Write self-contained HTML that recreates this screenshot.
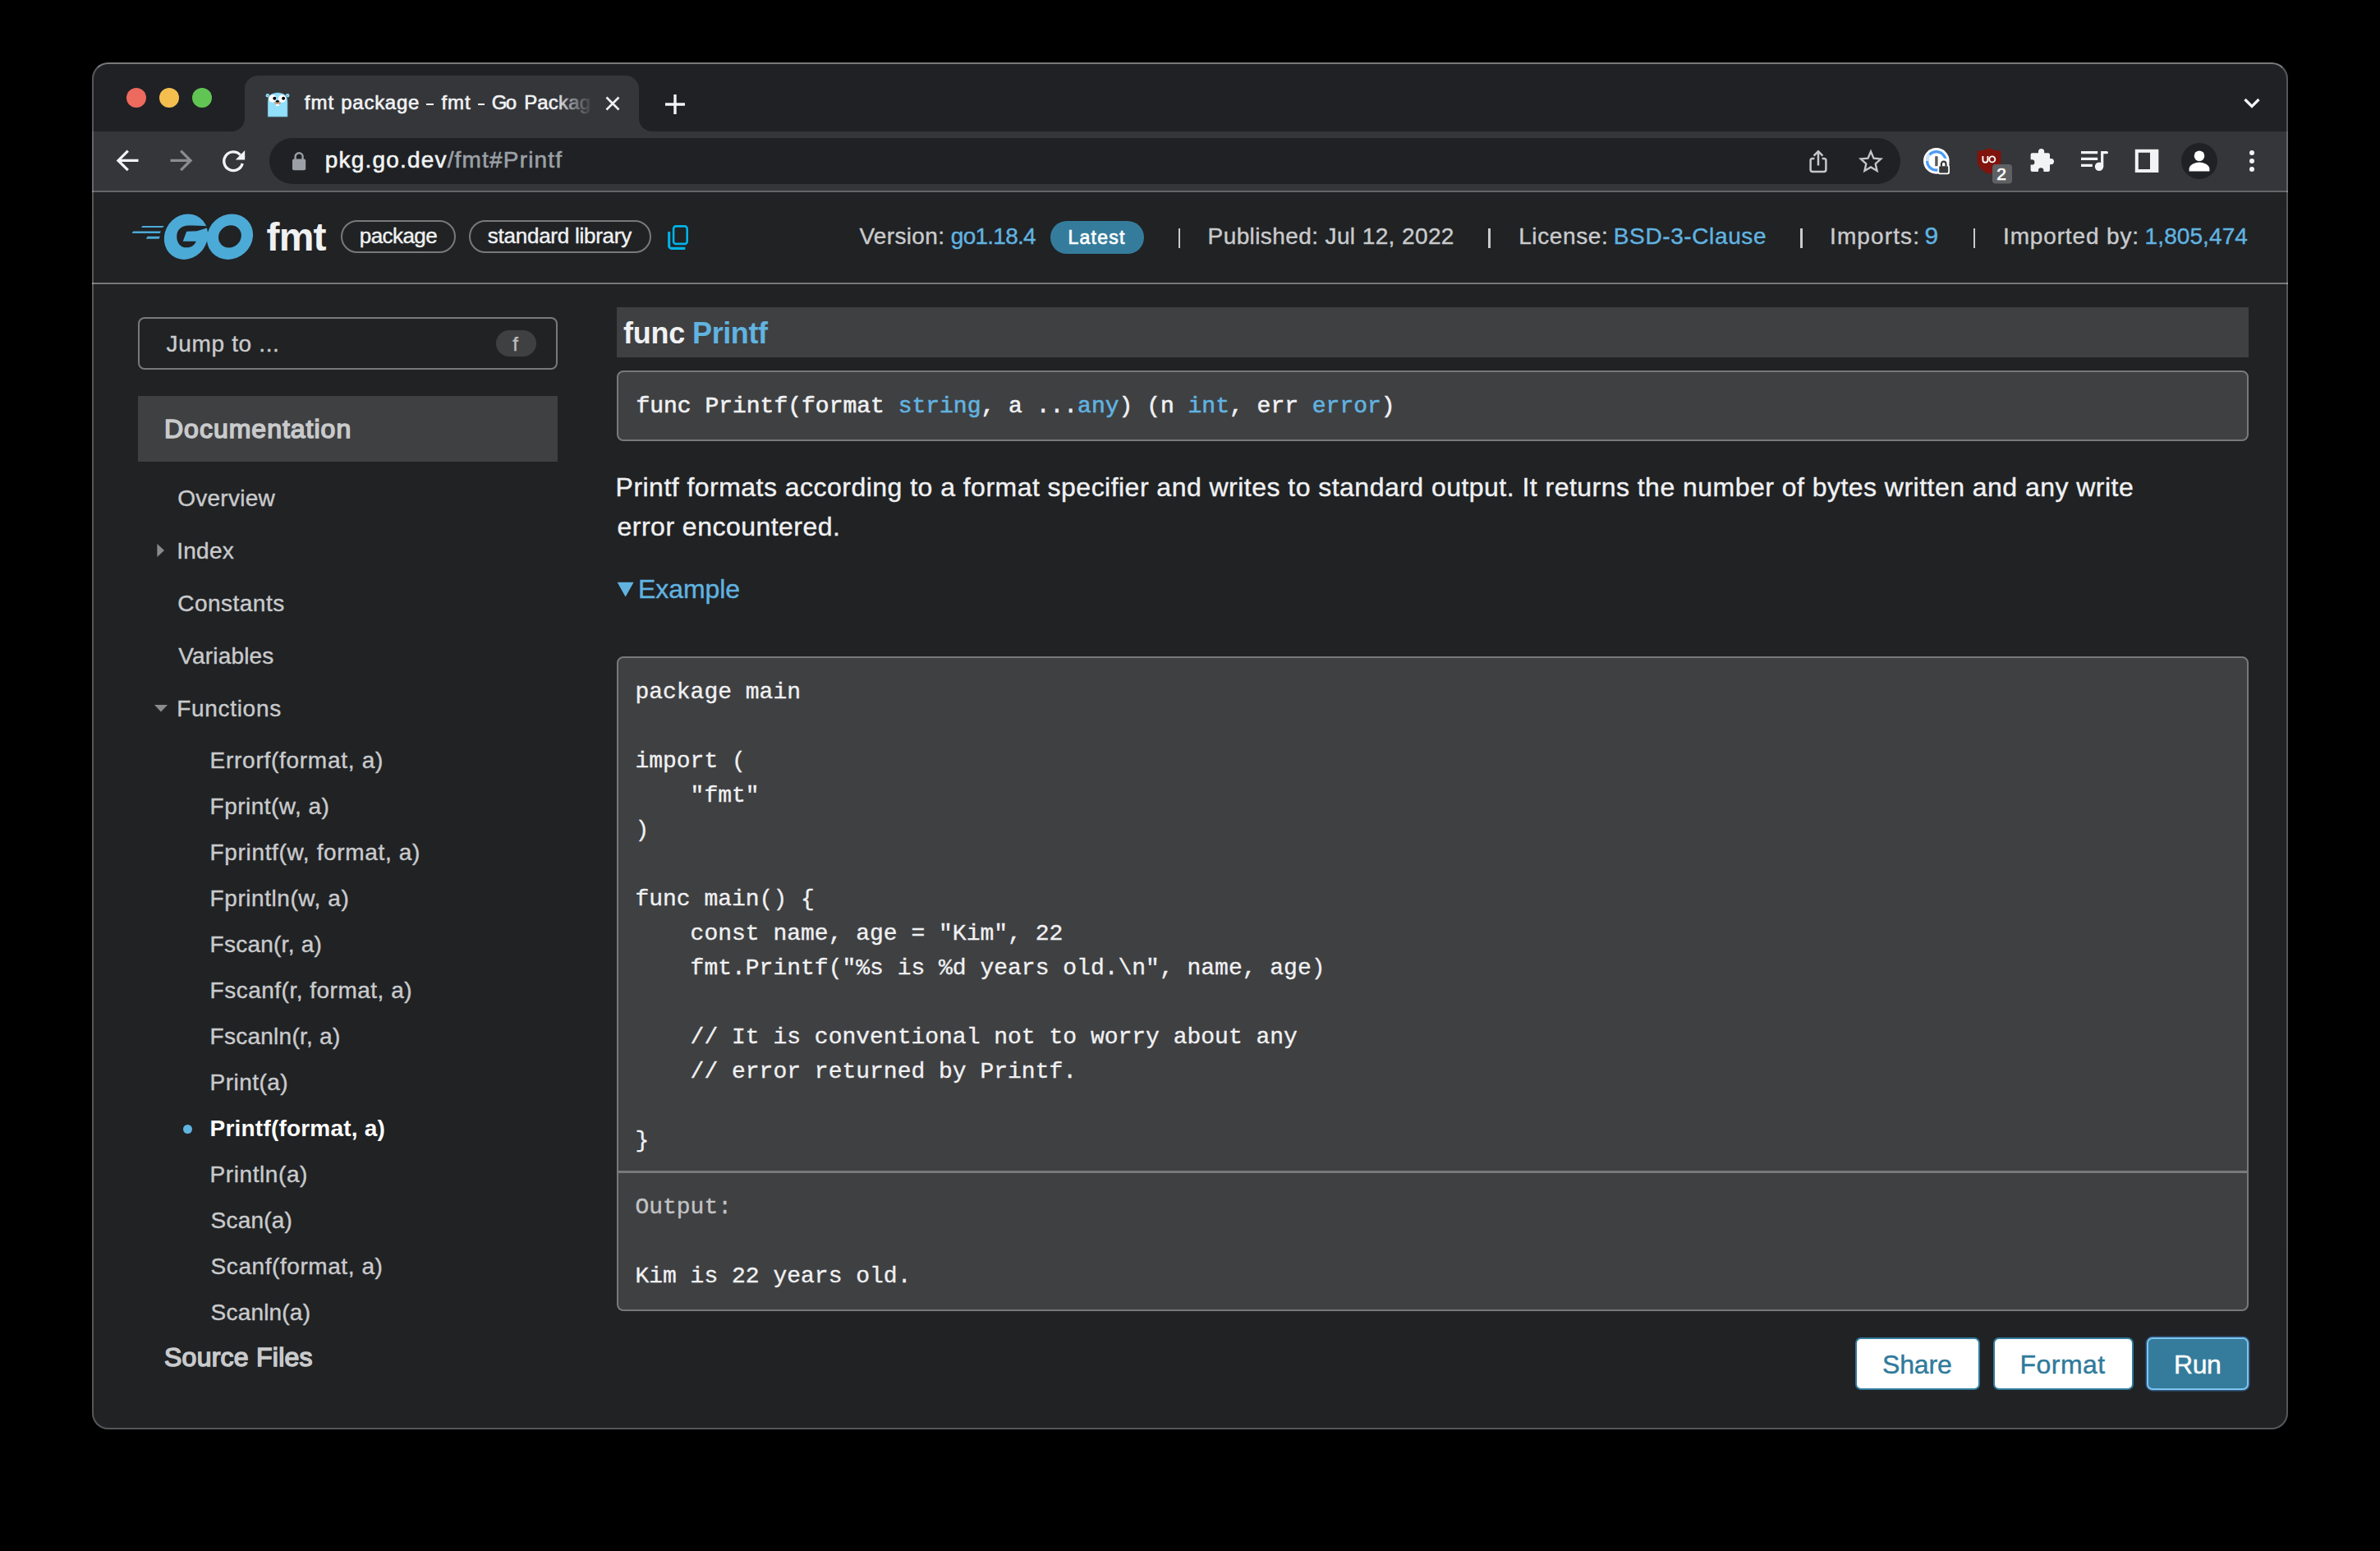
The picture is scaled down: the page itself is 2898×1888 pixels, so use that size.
<!DOCTYPE html>
<html lang="en"><head><meta charset="utf-8"><title>fmt package - fmt - Go Packages</title>
<style>
html,body{margin:0;padding:0;background:#000;}
body{width:2898px;height:1888px;position:relative;overflow:hidden;font-family:"Liberation Sans",sans-serif;}
#win{position:absolute;left:112px;top:76px;width:2674px;height:1664px;border-radius:20px;overflow:hidden;background:#202224;}
#pg{position:absolute;left:-112px;top:-76px;width:2898px;height:1888px;}
#rim{position:absolute;left:112px;top:76px;width:2674px;height:1664px;border-radius:20px;box-sizing:border-box;border:2px solid rgba(255,255,255,0.24);border-top-color:rgba(255,255,255,0.40);pointer-events:none;}
</style></head><body>
<div id="win"><div id="pg">
<div style="position:absolute;left:112px;top:76px;width:2674px;height:84px;background:#202124;"></div><div style="position:absolute;left:112px;top:160px;width:2674px;height:72px;background:#35363a;"></div><div style="position:absolute;left:112px;top:232px;width:2674px;height:2px;background:#646569;"></div><div style="position:absolute;left:298px;top:92px;width:480px;height:68px;background:#35363a;border-radius:16px 16px 0 0;"></div><svg style="position:absolute;left:282px;top:144px;" width="16" height="16" viewBox="0 0 16 16"><path d="M16 0 V16 H0 A16 16 0 0 0 16 0Z" fill="#35363a"/></svg><svg style="position:absolute;left:778px;top:144px;" width="16" height="16" viewBox="0 0 16 16"><path d="M0 0 V16 H16 A16 16 0 0 1 0 0Z" fill="#35363a"/></svg><div style="position:absolute;left:154px;top:107px;width:24px;height:24px;background:#ec6a5e;border-radius:50%;"></div><div style="position:absolute;left:194px;top:107px;width:24px;height:24px;background:#f4bf4f;border-radius:50%;"></div><div style="position:absolute;left:234px;top:107px;width:24px;height:24px;background:#61c554;border-radius:50%;"></div><svg style="position:absolute;left:320px;top:108px;" width="36" height="38" viewBox="0 0 36 38">
<g transform="translate(-320,-108)">
<circle cx="325.8" cy="116.3" r="2.2" fill="#92dffb"/><circle cx="350.2" cy="116.3" r="2.2" fill="#92dffb"/><ellipse cx="325.9" cy="116.5" rx="1" ry="0.5" fill="rgba(70,120,140,0.7)"/><ellipse cx="350.1" cy="116.5" rx="1" ry="0.5" fill="rgba(70,120,140,0.7)"/>
<path d="M326 142.2 V124 C326 116 331 112.8 338.1 112.8 C345.2 112.8 350.2 116 350.2 124 V142.2 Z" fill="#92dffb" stroke="rgba(70,110,125,0.55)" stroke-width="1"/>
<circle cx="331.8" cy="120" r="4.7" fill="#fff"/><circle cx="343.6" cy="120" r="4.7" fill="#fff"/>
<circle cx="334.3" cy="119.8" r="2" fill="#000"/><circle cx="345.1" cy="119.8" r="2" fill="#000"/>
<ellipse cx="338" cy="125.3" rx="3.9" ry="1.6" fill="#c99a7d"/>
<ellipse cx="337.9" cy="123.3" rx="2" ry="1.4" fill="#111"/>
<rect x="336.1" y="126.9" width="3.7" height="2.1" fill="#fff"/>
</g></svg><div style="position:absolute;left:370.8px;top:113.18px;font-family:'Liberation Sans', sans-serif;font-size:24px;line-height:1;color:#f1f3f4;font-weight:400;white-space:pre;letter-spacing:1.08px;-webkit-text-stroke:0.6px #f1f3f4;">fmt</div><div style="position:absolute;left:415.3px;top:113.18px;font-family:'Liberation Sans', sans-serif;font-size:24px;line-height:1;color:#f1f3f4;font-weight:400;white-space:pre;letter-spacing:0.72px;-webkit-text-stroke:0.6px #f1f3f4;">package</div><div style="position:absolute;left:519.2px;top:126px;width:8.4px;height:2.4px;background:#f1f3f4;"></div><div style="position:absolute;left:537.5px;top:113.18px;font-family:'Liberation Sans', sans-serif;font-size:24px;line-height:1;color:#f1f3f4;font-weight:400;white-space:pre;letter-spacing:0.9px;-webkit-text-stroke:0.6px #f1f3f4;">fmt</div><div style="position:absolute;left:582px;top:126px;width:8.4px;height:2.4px;background:#f1f3f4;"></div><div style="position:absolute;left:598.8px;top:113.18px;font-family:'Liberation Sans', sans-serif;font-size:24px;line-height:1;color:#f1f3f4;font-weight:400;white-space:pre;letter-spacing:-1.8px;-webkit-text-stroke:0.6px #f1f3f4;">Go</div><div style="position:absolute;left:638.2px;top:113.18px;font-family:'Liberation Sans', sans-serif;font-size:24px;line-height:1;color:#f1f3f4;font-weight:400;white-space:pre;letter-spacing:0.15px;-webkit-text-stroke:0.6px #f1f3f4;">Packag</div><div style="position:absolute;left:676px;top:100px;width:48px;height:50px;background:linear-gradient(90deg,rgba(53,54,58,0) 0,rgba(53,54,58,0.55) 22px,rgba(53,54,58,0.88) 40px,#35363a 48px);"></div><svg style="position:absolute;left:736px;top:116px;" width="20" height="20" viewBox="0 0 20 20"><path d="M2.5 2.5 L17.5 17.5 M17.5 2.5 L2.5 17.5" stroke="#f1f3f4" stroke-width="2.6" fill="none"/></svg><svg style="position:absolute;left:808px;top:113px;" width="28" height="28" viewBox="0 0 28 28"><path d="M14 2 V26 M2 14 H26" stroke="#f1f3f4" stroke-width="3.4" fill="none"/></svg><svg style="position:absolute;left:2730px;top:118px;" width="24" height="16" viewBox="0 0 24 16"><path d="M3.5 3 L12 11.5 L20.5 3" stroke="#f1f3f4" stroke-width="3.2" fill="none"/></svg><svg style="position:absolute;left:140px;top:180px;" width="32" height="32" viewBox="0 0 32 32"><path d="M28.5 15.4 H4.5 M15.8 3.6 L4 15.4 L15.8 27.2" stroke="#f1f3f4" stroke-width="3.3" fill="none" stroke-linejoin="miter"/></svg><svg style="position:absolute;left:204px;top:180px;" width="32" height="32" viewBox="0 0 32 32"><path d="M3.5 15.4 H27.5 M16.2 3.6 L28 15.4 L16.2 27.2" stroke="#8b8c90" stroke-width="3.3" fill="none"/></svg><svg style="position:absolute;left:268px;top:180px;" width="32" height="32" viewBox="0 0 32 32"><path d="M24.6 8.6 A11.4 11.4 0 1 0 27.2 19" stroke="#f1f3f4" stroke-width="3.3" fill="none"/>
<path d="M30.2 3 V14.4 H18.8 Z" fill="#f1f3f4"/></svg><div style="position:absolute;left:328px;top:168px;width:1986px;height:56px;background:#202124;border-radius:28px;"></div><svg style="position:absolute;left:352px;top:184px;" width="24" height="26" viewBox="0 0 24 26"><rect x="4" y="9.4" width="16.2" height="13.8" rx="2" fill="#9aa0a6"/>
<path d="M7.6 10 V6.8 A4.5 4.5 0 0 1 16.6 6.8 V10" stroke="#9aa0a6" stroke-width="2.4" fill="none"/></svg><div style="position:absolute;left:395.8px;top:181.10px;font-family:'Liberation Sans', sans-serif;font-size:28px;line-height:1;color:#f1f3f4;font-weight:400;white-space:pre;letter-spacing:1.183px;-webkit-text-stroke:0.6px #f1f3f4;">pkg.go.dev<span style="color:#9aa0a6;-webkit-text-stroke-color:#9aa0a6">/fmt#Printf</span></div><svg style="position:absolute;left:2198px;top:178px;" width="32" height="36" viewBox="0 0 32 36"><path d="M11.4 15 H9 A2.4 2.4 0 0 0 6.6 17.4 V28.6 A2.4 2.4 0 0 0 9 31 H23 A2.4 2.4 0 0 0 25.4 28.6 V17.4 A2.4 2.4 0 0 0 23 15 H20.6" stroke="#c4c7ca" stroke-width="2.5" fill="none"/>
<path d="M16 23.4 V6.4 M10.6 11.6 L16 6.2 L21.4 11.6" stroke="#c4c7ca" stroke-width="2.5" fill="none"/></svg><svg style="position:absolute;left:2260px;top:178px;" width="36" height="36" viewBox="0 0 36 36"><path transform="translate(18 18.6) scale(0.9) translate(-18 -18.6)" d="M18 5.2 L21.9 14.2 L31.6 15.1 L24.3 21.6 L26.4 31.2 L18 26.2 L9.6 31.2 L11.7 21.6 L4.4 15.1 L14.1 14.2 Z" stroke="#c4c7ca" stroke-width="2.6" fill="none" stroke-linejoin="miter"/></svg><svg style="position:absolute;left:2340px;top:178px;" width="40" height="40" viewBox="0 0 40 40"><circle cx="17.8" cy="17.9" r="15.8" fill="#fff"/>
<circle cx="17.8" cy="17.9" r="11.2" fill="none" stroke="#4b9cf5" stroke-width="3.2"/>
<path d="M17.8 17.9 m-11.2 0 a11.2 11.2 0 0 1 3 -7.6" stroke="#cfe3fb" stroke-width="3.4" fill="none"/>
<rect x="16.2" y="12.2" width="3.4" height="12" fill="#5a5a5a"/>
<rect x="19.4" y="22.6" width="14.6" height="11.6" rx="2.6" fill="#fff"/>
<path d="M22.6 24 V21.2 A4.1 4.1 0 0 1 30.8 21.2 V24" stroke="#fff" stroke-width="5" fill="none"/>
<rect x="23" y="19" width="7.4" height="6" fill="#fff"/><rect x="21.2" y="24.2" width="11" height="8.4" rx="1.4" fill="#3a3a3a"/>
<path d="M23.9 24.6 V21.4 A2.8 2.8 0 0 1 29.5 21.4 V24.6" stroke="#3a3a3a" stroke-width="2.2" fill="none"/></svg><svg style="position:absolute;left:2404px;top:178px;" width="50" height="48" viewBox="0 0 50 48"><path d="M18 2 C13.5 5 8.6 5.6 3.6 5.6 V17 C3.6 24.6 9.6 30.6 18 33.8 C26.4 30.6 32.4 24.6 32.4 17 V5.6 C27.4 5.6 22.5 5 18 2Z" fill="#80130d"/>
<path d="M10.4 12 V16.8 A3 3 0 0 0 16.4 16.8 V12" stroke="#fff" stroke-width="1.9" fill="none"/>
<circle cx="21.8" cy="15.9" r="3.5" stroke="#fff" stroke-width="1.9" fill="none"/>
<rect x="22" y="22" width="24" height="23.6" rx="4" fill="#5f6064"/></svg><div style="position:absolute;left:2431.3px;top:201.22px;font-family:'Liberation Sans', sans-serif;font-size:21px;line-height:1;color:#fff;font-weight:400;white-space:pre;-webkit-text-stroke:0.7px #fff;">2</div><svg style="position:absolute;left:2470px;top:178px;" width="34" height="34" viewBox="0 0 34 34"><path d="M12 6.6 A3.6 3.6 0 0 1 19.2 6.6 V8.2 H24 A2 2 0 0 1 26 10.2 V15 H27.4 A3.6 3.6 0 0 1 27.4 22.2 H26 V29 A2 2 0 0 1 24 31 H18.4 V29.4 A3.2 3.2 0 0 0 12 29.4 V31 H4.6 A2 2 0 0 1 2.6 29 V22.6 H4.2 A3.2 3.2 0 0 0 4.2 16.2 H2.6 V10.2 A2 2 0 0 1 4.6 8.2 H12 Z" fill="#f1f3f4"/></svg><svg style="position:absolute;left:2530px;top:180px;" width="40" height="32" viewBox="0 0 40 32"><path d="M4 5.7 H24.2 M4 13.3 H24.2 M4 21.3 H17.8" stroke="#f1f3f4" stroke-width="3.3" fill="none"/>
<circle cx="26" cy="22.8" r="5.2" fill="#f1f3f4"/>
<path d="M29.7 22.8 V5.7 H35.4" stroke="#f1f3f4" stroke-width="3.2" stroke-linecap="round" fill="none"/></svg><svg style="position:absolute;left:2598px;top:180px;" width="32" height="32" viewBox="0 0 32 32"><rect x="3.8" y="3.8" width="24.4" height="24.2" fill="none" stroke="#f1f3f4" stroke-width="4"/>
<rect x="20" y="2" width="10.2" height="28" fill="#f1f3f4"/></svg><svg style="position:absolute;left:2656px;top:174px;" width="44" height="44" viewBox="0 0 44 44"><circle cx="22" cy="22" r="22" fill="#202124"/>
<circle cx="22" cy="15.8" r="6.3" fill="#fff"/>
<path d="M9.6 34.4 V31.4 C9.6 26.2 17.6 23.4 22 23.4 C26.4 23.4 34.4 26.2 34.4 31.4 V34.4 Z" fill="#fff"/></svg><div style="position:absolute;left:2738.7px;top:182.7px;width:6.6px;height:6.6px;background:#f1f3f4;border-radius:50%;"></div><div style="position:absolute;left:2738.7px;top:192.7px;width:6.6px;height:6.6px;background:#f1f3f4;border-radius:50%;"></div><div style="position:absolute;left:2738.7px;top:202.7px;width:6.6px;height:6.6px;background:#f1f3f4;border-radius:50%;"></div><div style="position:absolute;left:112px;top:234px;width:2674px;height:1506px;background:#202224;"></div><div style="position:absolute;left:112px;top:344px;width:2674px;height:2px;background:#77787a;"></div><svg style="position:absolute;left:150px;top:250px;" width="260" height="80" viewBox="0 0 2380 732">
<path d="M215 228 H455 L440 248 H200 Z M112 288 H420 L410 310 H97 Z M270 345 H410 L400 372 H255 Z" fill="#4caad7"/>
<g transform="matrix(1 0 -0.09 1 31.4 0)">
<ellipse cx="700" cy="349" rx="243" ry="254" fill="#4caad7"/>
<ellipse cx="1190" cy="349" rx="256" ry="254" fill="#4caad7"/>
<ellipse cx="1189" cy="346" rx="127" ry="125" fill="#202224"/>
</g>
<path d="M597 345 C597 270 655 225 725 225 C800 225 880 228 948 233 L948 246 L822 286 L706 290 L666 400 H812 C800 440 760 470 705 470 C640 470 597 420 597 345 Z" fill="#202224"/>
</svg><div style="position:absolute;left:324.4px;top:265.27px;font-family:'Liberation Sans', sans-serif;font-size:48px;line-height:1;color:#f0f1f3;font-weight:700;white-space:pre;letter-spacing:-0.72px;">fmt</div><div style="position:absolute;left:415px;top:268px;width:140px;height:40px;box-sizing:border-box;border:2px solid #78797b;border-radius:20px;"></div><div style="position:absolute;left:437.8px;top:274.29px;font-family:'Liberation Sans', sans-serif;font-size:26px;line-height:1;color:#f0f1f3;font-weight:400;white-space:pre;letter-spacing:-0.57px;-webkit-text-stroke:0.4px #f0f1f3;">package</div><div style="position:absolute;left:571px;top:268px;width:222px;height:40px;box-sizing:border-box;border:2px solid #78797b;border-radius:20px;"></div><div style="position:absolute;left:593.8px;top:274.29px;font-family:'Liberation Sans', sans-serif;font-size:26px;line-height:1;color:#f0f1f3;font-weight:400;white-space:pre;letter-spacing:-0.252px;-webkit-text-stroke:0.4px #f0f1f3;">standard library</div><svg style="position:absolute;left:810px;top:270px;" width="32" height="38" viewBox="0 0 32 38"><rect x="10.1" y="5.4" width="16.6" height="21.5" rx="3" fill="none" stroke="#00b3e6" stroke-width="2.6"/>
<path d="M4.7 12 V29.4 A3 3 0 0 0 7.7 32.4 H24.4" stroke="#00b3e6" stroke-width="3.1" fill="none"/></svg><div style="position:absolute;left:1046.4px;top:274.00px;font-family:'Liberation Sans', sans-serif;font-size:28px;line-height:1;color:#c9cacc;font-weight:400;white-space:pre;letter-spacing:0.347px;-webkit-text-stroke:0.4px #c9cacc;">Version:</div><div style="position:absolute;left:1157.8px;top:274.00px;font-family:'Liberation Sans', sans-serif;font-size:28px;line-height:1;color:#61b3e0;font-weight:400;white-space:pre;letter-spacing:-0.733px;-webkit-text-stroke:0.4px #61b3e0;">go1.18.4</div><div style="position:absolute;left:1279px;top:269px;width:114px;height:40px;background:#357c9c;border-radius:20px;"></div><div style="position:absolute;left:1300.4px;top:278.23px;font-family:'Liberation Sans', sans-serif;font-size:23px;line-height:1;color:#fff;font-weight:400;white-space:pre;letter-spacing:1.26px;-webkit-text-stroke:0.7px #fff;">Latest</div><div style="position:absolute;left:1434.5px;top:277.6px;width:2.8px;height:24.8px;background:#c9cacc;"></div><div style="position:absolute;left:1812.0px;top:277.6px;width:2.8px;height:24.8px;background:#c9cacc;"></div><div style="position:absolute;left:2192.1px;top:277.6px;width:2.8px;height:24.8px;background:#c9cacc;"></div><div style="position:absolute;left:2402.7px;top:277.6px;width:2.8px;height:24.8px;background:#c9cacc;"></div><div style="position:absolute;left:1470.6px;top:274.00px;font-family:'Liberation Sans', sans-serif;font-size:28px;line-height:1;color:#c9cacc;font-weight:400;white-space:pre;letter-spacing:0.397px;-webkit-text-stroke:0.4px #c9cacc;">Published: Jul 12, 2022</div><div style="position:absolute;left:1849.2px;top:274.00px;font-family:'Liberation Sans', sans-serif;font-size:28px;line-height:1;color:#c9cacc;font-weight:400;white-space:pre;letter-spacing:0.604px;-webkit-text-stroke:0.4px #c9cacc;">License:</div><div style="position:absolute;left:1964.8px;top:274.00px;font-family:'Liberation Sans', sans-serif;font-size:28px;line-height:1;color:#61b3e0;font-weight:400;white-space:pre;letter-spacing:0.614px;-webkit-text-stroke:0.4px #61b3e0;">BSD-3-Clause</div><div style="position:absolute;left:2228.0px;top:274.00px;font-family:'Liberation Sans', sans-serif;font-size:28px;line-height:1;color:#c9cacc;font-weight:400;white-space:pre;letter-spacing:1.119px;-webkit-text-stroke:0.4px #c9cacc;">Imports:</div><div style="position:absolute;left:2343.4px;top:272.31px;font-family:'Liberation Sans', sans-serif;font-size:30px;line-height:1;color:#61b3e0;font-weight:400;white-space:pre;-webkit-text-stroke:0.4px #61b3e0;">9</div><div style="position:absolute;left:2439.0px;top:274.00px;font-family:'Liberation Sans', sans-serif;font-size:28px;line-height:1;color:#c9cacc;font-weight:400;white-space:pre;letter-spacing:0.859px;-webkit-text-stroke:0.4px #c9cacc;">Imported by:</div><div style="position:absolute;left:2611.6px;top:274.00px;font-family:'Liberation Sans', sans-serif;font-size:28px;line-height:1;color:#61b3e0;font-weight:400;white-space:pre;letter-spacing:0.09px;-webkit-text-stroke:0.4px #61b3e0;">1,805,474</div><div style="position:absolute;left:168px;top:386px;width:511px;height:64px;box-sizing:border-box;border:2px solid #78797b;border-radius:8px;"></div><div style="position:absolute;left:202.6px;top:405.30px;font-family:'Liberation Sans', sans-serif;font-size:28px;line-height:1;color:#c9cacc;font-weight:400;white-space:pre;letter-spacing:0.657px;-webkit-text-stroke:0.4px #c9cacc;">Jump to ...</div><div style="position:absolute;left:604px;top:402px;width:49px;height:32px;background:#3f4042;border-radius:16px;"></div><div style="position:absolute;left:624.3px;top:406.88px;font-family:'Liberation Sans', sans-serif;font-size:24px;line-height:1;color:#bcbdbf;font-weight:400;white-space:pre;-webkit-text-stroke:0.4px #bcbdbf;">f</div><div style="position:absolute;left:168px;top:482px;width:511px;height:80px;background:#3f4042;"></div><div style="position:absolute;left:200.0px;top:506.01px;font-family:'Liberation Sans', sans-serif;font-size:32px;line-height:1;color:#c9cacc;font-weight:400;white-space:pre;letter-spacing:0.998px;-webkit-text-stroke:1.6px #c9cacc;">Documentation</div><div style="position:absolute;left:216.2px;top:593.20px;font-family:'Liberation Sans', sans-serif;font-size:28px;line-height:1;color:#c9cacc;font-weight:400;white-space:pre;letter-spacing:0.257px;-webkit-text-stroke:0.4px #c9cacc;">Overview</div><div style="position:absolute;left:215.2px;top:657.00px;font-family:'Liberation Sans', sans-serif;font-size:28px;line-height:1;color:#c9cacc;font-weight:400;white-space:pre;letter-spacing:0.292px;-webkit-text-stroke:0.4px #c9cacc;">Index</div><div style="position:absolute;left:216.2px;top:720.80px;font-family:'Liberation Sans', sans-serif;font-size:28px;line-height:1;color:#c9cacc;font-weight:400;white-space:pre;letter-spacing:0.495px;-webkit-text-stroke:0.4px #c9cacc;">Constants</div><div style="position:absolute;left:217.2px;top:784.70px;font-family:'Liberation Sans', sans-serif;font-size:28px;line-height:1;color:#c9cacc;font-weight:400;white-space:pre;letter-spacing:0.191px;-webkit-text-stroke:0.4px #c9cacc;">Variables</div><div style="position:absolute;left:215.2px;top:848.50px;font-family:'Liberation Sans', sans-serif;font-size:28px;line-height:1;color:#c9cacc;font-weight:400;white-space:pre;letter-spacing:0.698px;-webkit-text-stroke:0.4px #c9cacc;">Functions</div><svg style="position:absolute;left:188px;top:660px;" width="16" height="20" viewBox="0 0 16 20"><path d="M3.4 2 L12 10 L3.4 18 Z" fill="#8a8b8d"/></svg><svg style="position:absolute;left:186px;top:854px;" width="20" height="16" viewBox="0 0 20 16"><path d="M2 4 L18 4 L10 12.6 Z" fill="#8a8b8d"/></svg><div style="position:absolute;left:255.6px;top:912.30px;font-family:'Liberation Sans', sans-serif;font-size:28px;line-height:1;color:#c9cacc;font-weight:400;white-space:pre;letter-spacing:0.726px;-webkit-text-stroke:0.4px #c9cacc;">Errorf(format, a)</div><div style="position:absolute;left:255.6px;top:968.30px;font-family:'Liberation Sans', sans-serif;font-size:28px;line-height:1;color:#c9cacc;font-weight:400;white-space:pre;letter-spacing:0.483px;-webkit-text-stroke:0.4px #c9cacc;">Fprint(w, a)</div><div style="position:absolute;left:255.6px;top:1024.30px;font-family:'Liberation Sans', sans-serif;font-size:28px;line-height:1;color:#c9cacc;font-weight:400;white-space:pre;letter-spacing:0.653px;-webkit-text-stroke:0.4px #c9cacc;">Fprintf(w, format, a)</div><div style="position:absolute;left:255.6px;top:1080.30px;font-family:'Liberation Sans', sans-serif;font-size:28px;line-height:1;color:#c9cacc;font-weight:400;white-space:pre;letter-spacing:0.561px;-webkit-text-stroke:0.4px #c9cacc;">Fprintln(w, a)</div><div style="position:absolute;left:255.6px;top:1136.30px;font-family:'Liberation Sans', sans-serif;font-size:28px;line-height:1;color:#c9cacc;font-weight:400;white-space:pre;letter-spacing:0.243px;-webkit-text-stroke:0.4px #c9cacc;">Fscan(r, a)</div><div style="position:absolute;left:255.6px;top:1192.30px;font-family:'Liberation Sans', sans-serif;font-size:28px;line-height:1;color:#c9cacc;font-weight:400;white-space:pre;letter-spacing:0.497px;-webkit-text-stroke:0.4px #c9cacc;">Fscanf(r, format, a)</div><div style="position:absolute;left:255.6px;top:1248.30px;font-family:'Liberation Sans', sans-serif;font-size:28px;line-height:1;color:#c9cacc;font-weight:400;white-space:pre;letter-spacing:0.255px;-webkit-text-stroke:0.4px #c9cacc;">Fscanln(r, a)</div><div style="position:absolute;left:255.6px;top:1304.30px;font-family:'Liberation Sans', sans-serif;font-size:28px;line-height:1;color:#c9cacc;font-weight:400;white-space:pre;letter-spacing:0.463px;-webkit-text-stroke:0.4px #c9cacc;">Print(a)</div><div style="position:absolute;left:255.6px;top:1360.30px;font-family:'Liberation Sans', sans-serif;font-size:28px;line-height:1;color:#ffffff;font-weight:700;white-space:pre;letter-spacing:0.202px;">Printf(format, a)</div><div style="position:absolute;left:223.4px;top:1369.4px;width:10.8px;height:10.8px;background:#5fb4e0;border-radius:50%;"></div><div style="position:absolute;left:255.6px;top:1416.30px;font-family:'Liberation Sans', sans-serif;font-size:28px;line-height:1;color:#c9cacc;font-weight:400;white-space:pre;letter-spacing:0.58px;-webkit-text-stroke:0.4px #c9cacc;">Println(a)</div><div style="position:absolute;left:256.6px;top:1472.30px;font-family:'Liberation Sans', sans-serif;font-size:28px;line-height:1;color:#c9cacc;font-weight:400;white-space:pre;letter-spacing:0.18px;-webkit-text-stroke:0.4px #c9cacc;">Scan(a)</div><div style="position:absolute;left:256.6px;top:1528.30px;font-family:'Liberation Sans', sans-serif;font-size:28px;line-height:1;color:#c9cacc;font-weight:400;white-space:pre;letter-spacing:0.57px;-webkit-text-stroke:0.4px #c9cacc;">Scanf(format, a)</div><div style="position:absolute;left:256.6px;top:1584.30px;font-family:'Liberation Sans', sans-serif;font-size:28px;line-height:1;color:#c9cacc;font-weight:400;white-space:pre;letter-spacing:0.191px;-webkit-text-stroke:0.4px #c9cacc;">Scanln(a)</div><div style="position:absolute;left:200.0px;top:1636.01px;font-family:'Liberation Sans', sans-serif;font-size:32px;line-height:1;color:#c9cacc;font-weight:400;white-space:pre;letter-spacing:0.245px;-webkit-text-stroke:1.5px #c9cacc;">Source Files</div><div style="position:absolute;left:751px;top:374px;width:1987px;height:61px;background:#3f4042;"></div><div style="position:absolute;left:759.1px;top:387.73px;font-family:'Liberation Sans', sans-serif;font-size:36px;line-height:1;color:#f0f1f3;font-weight:700;white-space:pre;letter-spacing:-0.24px;">func</div><div style="position:absolute;left:843.1px;top:387.73px;font-family:'Liberation Sans', sans-serif;font-size:36px;line-height:1;color:#61b3e0;font-weight:700;white-space:pre;letter-spacing:-0.432px;">Printf</div><div style="position:absolute;left:751px;top:451px;width:1987px;height:86px;box-sizing:border-box;border:2px solid #78797b;border-radius:8px;background:#3f4042;"></div><div style="position:absolute;left:774.4px;top:481.43px;font-family:'Liberation Mono', monospace;font-size:28px;line-height:1;color:#f0f1f3;font-weight:400;white-space:pre;-webkit-text-stroke:0.6px #f0f1f3;">func Printf(format <span style="color:#61b3e0;-webkit-text-stroke-color:#61b3e0">string</span>, a ...<span style="color:#61b3e0;-webkit-text-stroke-color:#61b3e0">any</span>) (n <span style="color:#61b3e0;-webkit-text-stroke-color:#61b3e0">int</span>, err <span style="color:#61b3e0;-webkit-text-stroke-color:#61b3e0">error</span>)</div><div style="position:absolute;left:749.6px;top:577.41px;font-family:'Liberation Sans', sans-serif;font-size:32px;line-height:1;color:#f0f1f3;font-weight:400;white-space:pre;letter-spacing:0.47px;-webkit-text-stroke:0.4px #f0f1f3;">Printf formats according to a format specifier and writes to standard output. It returns the number of bytes written and any write</div><div style="position:absolute;left:751.6px;top:624.91px;font-family:'Liberation Sans', sans-serif;font-size:32px;line-height:1;color:#f0f1f3;font-weight:400;white-space:pre;letter-spacing:0.471px;-webkit-text-stroke:0.4px #f0f1f3;">error encountered.</div><svg style="position:absolute;left:750px;top:706px;" width="24" height="24" viewBox="0 0 24 24"><path d="M1.6 2.8 H21.6 L11.6 20.6 Z" fill="#61b3e0"/></svg><div style="position:absolute;left:777.0px;top:700.51px;font-family:'Liberation Sans', sans-serif;font-size:32px;line-height:1;color:#61b3e0;font-weight:400;white-space:pre;letter-spacing:-0.075px;-webkit-text-stroke:0.4px #61b3e0;">Example</div><div style="position:absolute;left:751px;top:799px;width:1987px;height:797px;box-sizing:border-box;border:2px solid #78797b;border-radius:8px;background:#3f4042;"></div><div style="position:absolute;left:753px;top:1425px;width:1983px;height:2.8px;background:#78797b;"></div><div style="position:absolute;left:773.4px;top:829.43px;font-family:'Liberation Mono', monospace;font-size:28px;line-height:1;color:#f0f1f3;font-weight:400;white-space:pre;-webkit-text-stroke:0.35px #f0f1f3;">package main</div><div style="position:absolute;left:773.4px;top:913.43px;font-family:'Liberation Mono', monospace;font-size:28px;line-height:1;color:#f0f1f3;font-weight:400;white-space:pre;-webkit-text-stroke:0.35px #f0f1f3;">import (</div><div style="position:absolute;left:773.4px;top:955.43px;font-family:'Liberation Mono', monospace;font-size:28px;line-height:1;color:#f0f1f3;font-weight:400;white-space:pre;-webkit-text-stroke:0.35px #f0f1f3;">    &quot;fmt&quot;</div><div style="position:absolute;left:773.4px;top:997.43px;font-family:'Liberation Mono', monospace;font-size:28px;line-height:1;color:#f0f1f3;font-weight:400;white-space:pre;-webkit-text-stroke:0.35px #f0f1f3;">)</div><div style="position:absolute;left:773.4px;top:1081.43px;font-family:'Liberation Mono', monospace;font-size:28px;line-height:1;color:#f0f1f3;font-weight:400;white-space:pre;-webkit-text-stroke:0.35px #f0f1f3;">func main() {</div><div style="position:absolute;left:773.4px;top:1123.43px;font-family:'Liberation Mono', monospace;font-size:28px;line-height:1;color:#f0f1f3;font-weight:400;white-space:pre;-webkit-text-stroke:0.35px #f0f1f3;">    const name, age = &quot;Kim&quot;, 22</div><div style="position:absolute;left:773.4px;top:1165.43px;font-family:'Liberation Mono', monospace;font-size:28px;line-height:1;color:#f0f1f3;font-weight:400;white-space:pre;-webkit-text-stroke:0.35px #f0f1f3;">    fmt.Printf(&quot;%s is %d years old.\n&quot;, name, age)</div><div style="position:absolute;left:773.4px;top:1249.43px;font-family:'Liberation Mono', monospace;font-size:28px;line-height:1;color:#f0f1f3;font-weight:400;white-space:pre;-webkit-text-stroke:0.35px #f0f1f3;">    // It is conventional not to worry about any</div><div style="position:absolute;left:773.4px;top:1291.43px;font-family:'Liberation Mono', monospace;font-size:28px;line-height:1;color:#f0f1f3;font-weight:400;white-space:pre;-webkit-text-stroke:0.35px #f0f1f3;">    // error returned by Printf.</div><div style="position:absolute;left:773.4px;top:1375.43px;font-family:'Liberation Mono', monospace;font-size:28px;line-height:1;color:#f0f1f3;font-weight:400;white-space:pre;-webkit-text-stroke:0.35px #f0f1f3;">}</div><div style="position:absolute;left:773.4px;top:1456.13px;font-family:'Liberation Mono', monospace;font-size:28px;line-height:1;color:#c3c4c6;font-weight:400;white-space:pre;-webkit-text-stroke:0.35px #c3c4c6;">Output:</div><div style="position:absolute;left:773.4px;top:1540.13px;font-family:'Liberation Mono', monospace;font-size:28px;line-height:1;color:#f0f1f3;font-weight:400;white-space:pre;-webkit-text-stroke:0.35px #f0f1f3;">Kim is 22 years old.</div><div style="position:absolute;left:2259px;top:1628px;width:152px;height:64px;box-sizing:border-box;border:2px solid #2f7a9b;border-radius:7px;background:#fff;"></div><div style="position:absolute;left:2292.0px;top:1645.11px;font-family:'Liberation Sans', sans-serif;font-size:32px;line-height:1;color:#2f7a9b;font-weight:400;white-space:pre;letter-spacing:-0.135px;-webkit-text-stroke:0.4px #2f7a9b;">Share</div><div style="position:absolute;left:2427px;top:1628px;width:171px;height:64px;box-sizing:border-box;border:2px solid #2f7a9b;border-radius:7px;background:#fff;"></div><div style="position:absolute;left:2459.6px;top:1645.11px;font-family:'Liberation Sans', sans-serif;font-size:32px;line-height:1;color:#2f7a9b;font-weight:400;white-space:pre;letter-spacing:0.432px;-webkit-text-stroke:0.4px #2f7a9b;">Format</div><div style="position:absolute;left:2614px;top:1628px;width:124px;height:64px;box-sizing:border-box;border:2px solid #7cc4ee;border-radius:7px;background:#357c9c;box-shadow:0 0 0 1.5px rgba(60,130,200,0.55);"></div><div style="position:absolute;left:2647.0px;top:1645.11px;font-family:'Liberation Sans', sans-serif;font-size:32px;line-height:1;color:#fff;font-weight:400;white-space:pre;letter-spacing:-0.45px;-webkit-text-stroke:0.4px #fff;">Run</div></div></div><div id="rim"></div>
</body></html>
